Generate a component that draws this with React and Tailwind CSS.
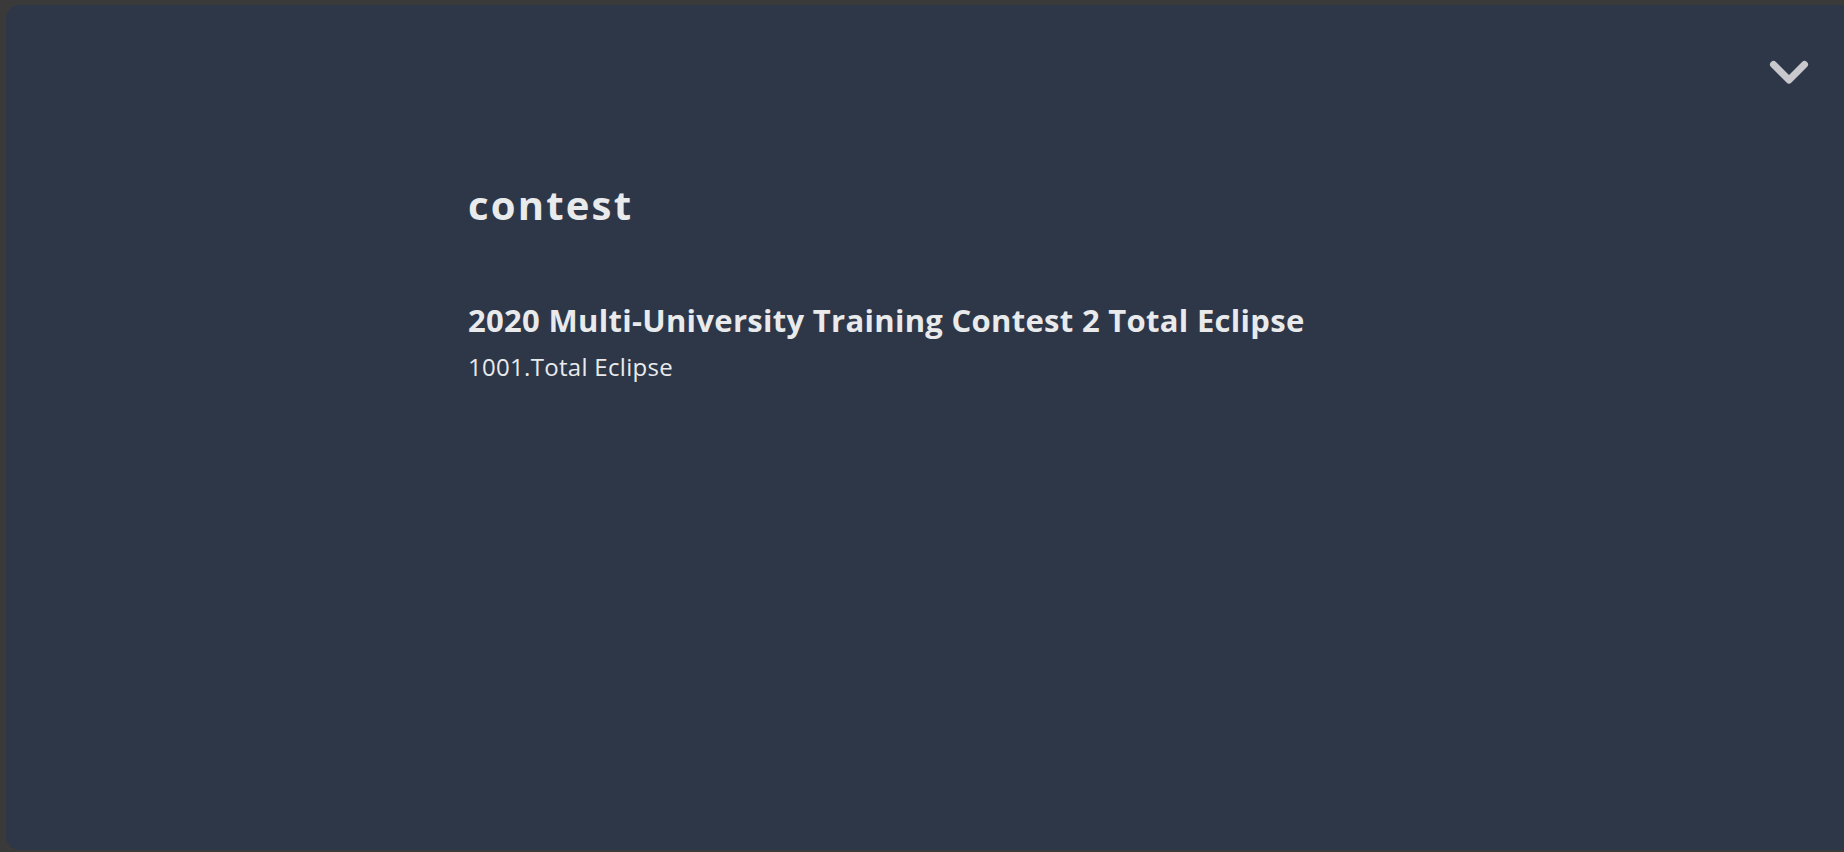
export default function App() {
  return (
    <div className="w-[1844px] h-[852px] bg-[#3a3a3a] pt-[5px] pl-[6px] pb-[2px] overflow-hidden" style={{ fontFamily: '"Open Sans", "Liberation Sans", sans-serif' }}>
      <div className="relative h-full bg-[#2d3748] rounded-l-[14px] text-[#e9eaec]">
        <button className="absolute left-[1760px] top-[51px] w-[46px] h-[32px]" aria-label="collapse">
          <svg width="46" height="32" viewBox="0 0 46 32">
            <polyline points="7.5,8.5 23,24 38.5,8.5" fill="none" stroke="#c9c9cd" strokeWidth="7" strokeLinecap="round" strokeLinejoin="round" />
          </svg>
        </button>
        <div className="mx-auto max-w-[960px] px-[23px] pt-[178px]">
          <h1 className="text-[40px] leading-[44px] font-bold tracking-[2.2px]">contest</h1>
          <div className="mt-[74px]">
            <h2 className="text-[31px] leading-[38px] font-bold tracking-[0.3px]">2020 Multi-University Training Contest 2 Total Eclipse</h2>
            <p className="mt-[13px] text-[24px] leading-[30px] font-normal tracking-[0.3px]">1001.Total Eclipse</p>
          </div>
        </div>
      </div>
    </div>
  );
}
